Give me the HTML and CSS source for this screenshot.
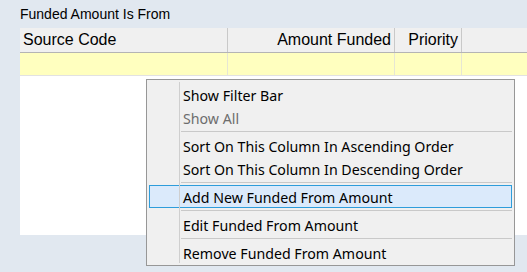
FILE: index.html
```html
<!DOCTYPE html>
<html lang="en">
<head>
    <meta charset="UTF-8">
    <title>Funded Amount Is From</title>
    <link rel="stylesheet" href="styles.css">
</head>
<body>
    <div class="panel">
        <div class="panel-title">Funded Amount Is From</div>

        <div class="grid">
            <div class="grid-row grid-head">
                <div class="cell">Source Code</div>
                <div class="cell num">Amount Funded</div>
                <div class="cell num">Priority</div>
                <div class="cell filler"></div>
            </div>
            <div class="grid-row grid-new">
                <div class="cell"></div>
                <div class="cell"></div>
                <div class="cell"></div>
                <div class="cell filler"></div>
            </div>
            <div class="grid-body"></div>
        </div>
    </div>

    <!-- right-click menu on the grid -->
    <ul class="context-menu">
        <li class="menu-item">Show Filter Bar</li>
        <li class="menu-item disabled">Show All</li>
        <li class="menu-sep"></li>
        <li class="menu-item">Sort On This Column In Ascending Order</li>
        <li class="menu-item">Sort On This Column In Descending Order</li>
        <li class="menu-sep"></li>
        <li class="menu-item active">Add New Funded From Amount</li>
        <li class="menu-sep"></li>
        <li class="menu-item">Edit Funded From Amount</li>
        <li class="menu-sep"></li>
        <li class="menu-item">Remove Funded From Amount</li>
    </ul>
</body>
</html>
```

FILE: styles.css
```css
body {
    margin: 0;
    background: #e1e8f0;
    font-family: "Liberation Sans", Arial, sans-serif;
    color: #000;
    overflow: hidden;
}
.panel {
    padding-left: 20px;
}
.panel-title {
    font-size: 14px;
    line-height: 16px;
    padding-top: 6px;
    height: 22px;
}
.grid {
    background: #ffffff;
    height: 207px;
}
.grid-row {
    display: grid;
    grid-template-columns: 208px 167px 67px 1fr;
}
.cell {
    border-right: 1px solid #c9c9c9;
    padding: 0 3px;
    white-space: nowrap;
    overflow: hidden;
}
.cell.num {
    text-align: right;
}
.cell.filler {
    border-right: none;
}
.grid-head {
    background: #f0f0f0;
    border-bottom: 1px solid #b4b4b4;
    font-size: 16px;
    line-height: 24px;
    height: 24px;
}
.grid-new {
    background: #ffffbf;
    border-bottom: 1px solid #e2e2e2;
    height: 22px;
}
.grid-new .cell {
    border-right-color: #e6e6d4;
}

.context-menu {
    position: absolute;
    left: 146px;
    top: 79px;
    width: 369px;
    box-sizing: border-box;
    margin: 0;
    padding: 3px 2px 1px;
    list-style: none;
    background: #f0f0f0;
    border: 1px solid #979797;
    font-family: "Noto Sans", "Open Sans", sans-serif;
    font-size: 14.2px;
}
.context-menu::before {
    content: "";
    position: absolute;
    left: 32px;
    top: 2px;
    bottom: 2px;
    width: 1px;
    background: #cfcfcf;
}
.menu-item {
    height: 23px;
    line-height: 23px;
    padding-left: 33px;
    border: 1px solid transparent;
    margin: 0;
    box-sizing: border-box;
    white-space: nowrap;
}
.menu-item.disabled {
    color: #6d6d6d;
}
.menu-item.active {
    background: #dbeafb;
    border-color: #2e9ddb;
}
.menu-sep {
    height: 1px;
    margin: 2px 0 2px 32px;
    background: #c9c9c9;
}
```
